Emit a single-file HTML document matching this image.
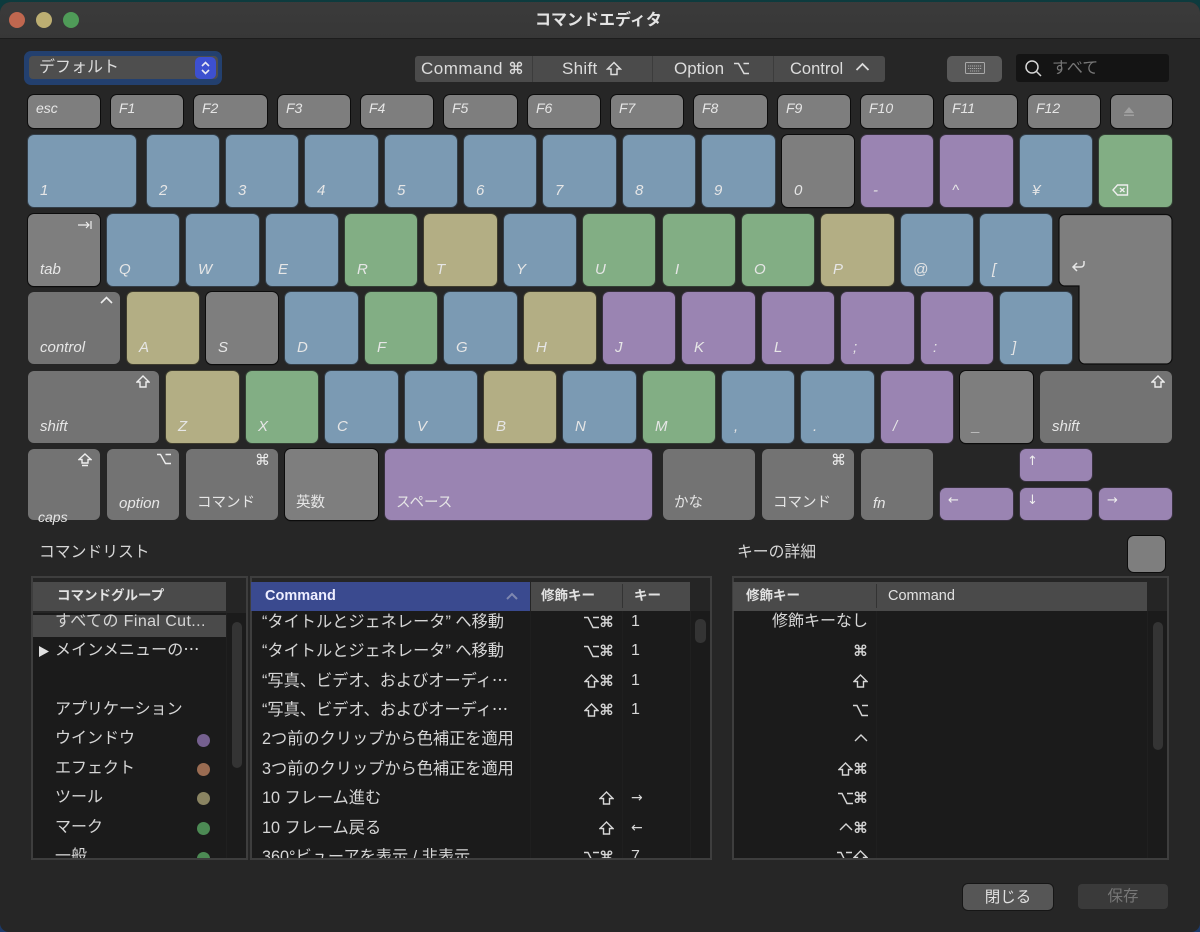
<!DOCTYPE html>
<html lang="ja"><head><meta charset="utf-8"><title>コマンドエディタ</title>
<style>
*{box-sizing:border-box}
html,body{margin:0;padding:0;width:1200px;height:932px;overflow:hidden}
html{background:#0d3b3e}
body{background:linear-gradient(#0d3b3e 0,#0d3b3e 50%,#1d3a6a 100%);font-family:"Liberation Sans","Noto Sans CJK JP",sans-serif;color:#d8d8d8;position:relative}
#win{position:absolute;left:0;top:2px;width:1200px;height:930px;background:#262626;border-radius:11px 11px 9px 9px;overflow:hidden}
#stage{position:absolute;left:0;top:-2px;width:1200px;height:932px}
.abs,.k{position:absolute}
.k{border-radius:6px;font-style:italic;font-size:15px;color:#e6e6e6}
.k b{position:absolute;left:12px;bottom:8px;font-weight:400;line-height:16px;white-space:nowrap}
.k i{position:absolute;right:8px;top:2px;font:normal 14px/16px "DejaVu Sans",sans-serif;color:#eee}
.k svg.ic{position:absolute;fill:none;stroke:#eee;stroke-width:1.4}
.g{background:#7e7e7e;box-shadow:0 0 0 1px #0c0c0c,0 1px 1px #000}
.m{background:#737373}
.b{background:#7b9ab3;box-shadow:0 0 0 1px rgba(90,135,175,.25)}
.n{background:#82ae84;box-shadow:0 0 0 1px rgba(90,140,95,.25)}
.y{background:#b3ae84;box-shadow:0 0 0 1px rgba(140,130,70,.25)}
.p{background:#9a84b2;box-shadow:0 0 0 1px rgba(110,85,140,.25)}
.f{font-size:14px}
.f b{top:5px;bottom:auto;left:8px}
.jp{font-style:normal;font-size:14.5px}
.jp b{left:11px;bottom:9px}
.panel{position:absolute;top:576px;height:284px;border:2px solid #3e3e3e;background:#1b1b1b;overflow:hidden}
.t{position:absolute;margin-top:1px;line-height:20px;font-size:16px;white-space:nowrap;color:#d6d6d6}
.c{font-size:16.2px}
.r{text-align:right;font-family:"DejaVu Sans","Liberation Sans",sans-serif;font-size:15px;-webkit-text-stroke:.25px #d6d6d6}
.r svg{fill:none;stroke:#d6d6d6;stroke-width:1.4;vertical-align:-2px;margin-left:1px}
.hd{position:absolute;top:582px;height:29px;background:#4a4a4a}
.ht{position:absolute;top:586px;line-height:20px;font-size:13.5px;font-weight:700;color:#e2e2e2;white-space:nowrap}
.sc{position:absolute;background:#343434;border-radius:5px}
.dot{position:absolute;width:13px;height:13px;border-radius:50%;left:197px}
.seg{position:absolute;top:58px;line-height:22px;font-size:17px;color:#dcdcdc;white-space:nowrap}
.ss{position:absolute;fill:none;stroke:#dcdcdc;stroke-width:1.5}
</style></head><body>
<div id="win"><div id="stage">
<div class="abs" style="left:0;top:0;width:1200px;height:39px;background:linear-gradient(#3b3b3b,#373737);border-bottom:1px solid #1d1d1d"></div>
<div class="abs" style="left:9px;top:12px;width:16px;height:16px;border-radius:50%;background:#c0674f"></div>
<div class="abs" style="left:36px;top:12px;width:16px;height:16px;border-radius:50%;background:#bcae72"></div>
<div class="abs" style="left:63px;top:12px;width:16px;height:16px;border-radius:50%;background:#4f9b58"></div>
<div class="abs" style="left:0;top:11px;width:1197px;text-align:center;font-size:16px;line-height:20px;font-weight:700;color:#e4e4e4">コマンドエディタ</div>

<div class="abs" style="left:24px;top:51px;width:198px;height:34px;border-radius:7px;background:#23406f"></div>
<div class="abs" style="left:29px;top:56px;width:189px;height:23px;border-radius:4px;background:#4e4e4e"></div>
<div class="abs" style="left:39px;top:57px;line-height:22px;font-size:16px;color:#dcdcdc">デフォルト</div>
<div class="abs" style="left:195px;top:57px;width:21px;height:22px;border-radius:5px;background:#3d50d0"></div>
<svg class="abs" style="left:195px;top:57px" width="21" height="22" fill="none" stroke="#e8e8f4" stroke-width="1.6"><path d="M7 9l3.5-3.5L14 9M7 13l3.5 3.5L14 13"/></svg>

<div class="abs" style="left:415px;top:56px;width:470px;height:26px;border-radius:3px;background:#4b4b4b"></div>
<div class="abs" style="left:532px;top:56px;width:1px;height:26px;background:#3c3c3c"></div>
<div class="abs" style="left:652px;top:56px;width:1px;height:26px;background:#3c3c3c"></div>
<div class="abs" style="left:773px;top:56px;width:1px;height:26px;background:#3c3c3c"></div>
<div class="seg" style="left:421px;letter-spacing:.5px">Command</div>
<div class="seg" style="left:508px;font:16px/22px 'DejaVu Sans',sans-serif;-webkit-text-stroke:.2px #dcdcdc">⌘</div>
<div class="seg" style="left:562px;letter-spacing:.3px">Shift</div>
<svg class="ss" style="left:606px;top:61px" width="16" height="15"><path d="M8 1.500L14.500 8H11V13.500H5V8H1.500z"/></svg>
<div class="seg" style="left:674px">Option</div>
<svg class="ss" style="left:733px;top:62px" width="17" height="13"><path d="M1 1.500h4.500l5.500 10h5M10.500 1.500H16"/></svg>
<div class="seg" style="left:790px;font-size:16.5px">Control</div>
<svg class="ss" style="left:855px;top:62px;stroke-width:1.8" width="15" height="9"><path d="M1.500 8L7.500 2l6 6"/></svg>

<div class="abs" style="left:947px;top:56px;width:55px;height:26px;border-radius:5px;background:#595959"></div>
<svg class="abs" style="left:964px;top:61px" width="22" height="15" fill="none" stroke="#a8a8a8"><rect x="1.500" y="1.500" width="19" height="11" rx="1"/><path d="M4 5h14M4 7.500h14M6 10h10" stroke-dasharray="1.200 .8"/></svg>
<div class="abs" style="left:1016px;top:54px;width:153px;height:28px;border-radius:3px;background:#141414"></div>
<svg class="abs" style="left:1024px;top:59px" width="20" height="20" fill="none" stroke="#d6d6d6" stroke-width="1.500"><circle cx="8" cy="8" r="6"/><path d="M12.500 12.500L17 17"/></svg>
<div class="abs" style="left:1052px;top:59px;line-height:20px;font-size:16px;color:#777">すべて</div>

<!-- F row -->
<div class="k g f" style="left:28px;top:95px;width:72px;height:33px"><b>esc</b></div>
<div class="k g f" style="left:111px;top:95px;width:72px;height:33px"><b>F1</b></div>
<div class="k g f" style="left:194px;top:95px;width:73px;height:33px"><b>F2</b></div>
<div class="k g f" style="left:278px;top:95px;width:72px;height:33px"><b>F3</b></div>
<div class="k g f" style="left:361px;top:95px;width:72px;height:33px"><b>F4</b></div>
<div class="k g f" style="left:444px;top:95px;width:73px;height:33px"><b>F5</b></div>
<div class="k g f" style="left:528px;top:95px;width:72px;height:33px"><b>F6</b></div>
<div class="k g f" style="left:611px;top:95px;width:72px;height:33px"><b>F7</b></div>
<div class="k g f" style="left:694px;top:95px;width:73px;height:33px"><b>F8</b></div>
<div class="k g f" style="left:778px;top:95px;width:72px;height:33px"><b>F9</b></div>
<div class="k g f" style="left:861px;top:95px;width:72px;height:33px"><b>F10</b></div>
<div class="k g f" style="left:944px;top:95px;width:73px;height:33px"><b>F11</b></div>
<div class="k g f" style="left:1028px;top:95px;width:72px;height:33px"><b>F12</b></div>
<div class="k g" style="left:1111px;top:95px;width:61px;height:33px"><svg class="abs" style="left:12px;top:11px" width="12" height="12" fill="#a0a0a0"><path d="M6 1l5 6H1zM1 8.500h10V10H1z"/></svg></div>

<!-- Number row -->
<div class="k b" style="left:28px;top:135px;width:108px;height:72px"><b>1</b></div>
<div class="k b" style="left:147px;top:135px;width:72px;height:72px"><b>2</b></div>
<div class="k b" style="left:226px;top:135px;width:72px;height:72px"><b>3</b></div>
<div class="k b" style="left:305px;top:135px;width:73px;height:72px"><b>4</b></div>
<div class="k b" style="left:385px;top:135px;width:72px;height:72px"><b>5</b></div>
<div class="k b" style="left:464px;top:135px;width:72px;height:72px"><b>6</b></div>
<div class="k b" style="left:543px;top:135px;width:73px;height:72px"><b>7</b></div>
<div class="k b" style="left:623px;top:135px;width:72px;height:72px"><b>8</b></div>
<div class="k b" style="left:702px;top:135px;width:73px;height:72px"><b>9</b></div>
<div class="k g" style="left:782px;top:135px;width:72px;height:72px"><b>0</b></div>
<div class="k p" style="left:861px;top:135px;width:72px;height:72px"><b>-</b></div>
<div class="k p" style="left:940px;top:135px;width:73px;height:72px"><b>^</b></div>
<div class="k b" style="left:1020px;top:135px;width:72px;height:72px"><b>¥</b></div>
<div class="k n" style="left:1099px;top:135px;width:73px;height:72px"><svg class="abs" style="left:13px;top:48px" width="17" height="14" fill="none" stroke="#eee" stroke-width="1.400"><path d="M5.500 2H15.500V12H5.500L1 7zM8 5l4.500 4M12.500 5L8 9"/></svg></div>

<!-- Row 2 -->
<div class="k g" style="left:28px;top:214px;width:72px;height:72px"><b>tab</b><svg class="ic" style="left:50px;top:6px;stroke-width:1.200" width="14" height="10"><path d="M0 5h11M8 2l3 3-3 3M13 1v8"/></svg></div>
<div class="k b" style="left:107px;top:214px;width:72px;height:72px"><b>Q</b></div>
<div class="k b" style="left:186px;top:214px;width:73px;height:72px"><b>W</b></div>
<div class="k b" style="left:266px;top:214px;width:72px;height:72px"><b>E</b></div>
<div class="k n" style="left:345px;top:214px;width:72px;height:72px"><b>R</b></div>
<div class="k y" style="left:424px;top:214px;width:73px;height:72px"><b>T</b></div>
<div class="k b" style="left:504px;top:214px;width:72px;height:72px"><b>Y</b></div>
<div class="k n" style="left:583px;top:214px;width:72px;height:72px"><b>U</b></div>
<div class="k n" style="left:663px;top:214px;width:72px;height:72px"><b>I</b></div>
<div class="k n" style="left:742px;top:214px;width:72px;height:72px"><b>O</b></div>
<div class="k y" style="left:821px;top:214px;width:73px;height:72px"><b>P</b></div>
<div class="k b" style="left:901px;top:214px;width:72px;height:72px"><b>@</b></div>
<div class="k b" style="left:980px;top:214px;width:72px;height:72px"><b>[</b></div>
<!-- return -->
<svg class="abs" style="left:1058px;top:213px" width="116" height="152"><path d="M7 1.500H108a6 6 0 0 1 6 6V145a6 6 0 0 1-6 6H27a6 6 0 0 1-6-6V73H7a6 6 0 0 1-6-6V7.500a6 6 0 0 1 6-6z" fill="#7e7e7e" stroke="#0c0c0c" stroke-width="1.200"/><path d="M26 48v3a3 3 0 0 1-3 3H15M19 50l-4 4 4 4" fill="none" stroke="#e6e6e6" stroke-width="1.500"/></svg>

<!-- Row 3 -->
<div class="k m" style="left:28px;top:292px;width:92px;height:72px"><b>control</b><svg class="ic" style="left:72px;top:4px;stroke-width:1.600" width="13" height="8"><path d="M1 7l5.500-5.500L12 7"/></svg></div>
<div class="k y" style="left:127px;top:292px;width:72px;height:72px"><b>A</b></div>
<div class="k g" style="left:206px;top:292px;width:72px;height:72px"><b>S</b></div>
<div class="k b" style="left:285px;top:292px;width:73px;height:72px"><b>D</b></div>
<div class="k n" style="left:365px;top:292px;width:72px;height:72px"><b>F</b></div>
<div class="k b" style="left:444px;top:292px;width:73px;height:72px"><b>G</b></div>
<div class="k y" style="left:524px;top:292px;width:72px;height:72px"><b>H</b></div>
<div class="k p" style="left:603px;top:292px;width:72px;height:72px"><b>J</b></div>
<div class="k p" style="left:682px;top:292px;width:73px;height:72px"><b>K</b></div>
<div class="k p" style="left:762px;top:292px;width:72px;height:72px"><b>L</b></div>
<div class="k p" style="left:841px;top:292px;width:73px;height:72px"><b>;</b></div>
<div class="k p" style="left:921px;top:292px;width:72px;height:72px"><b>:</b></div>
<div class="k b" style="left:1000px;top:292px;width:72px;height:72px"><b>]</b></div>

<!-- Row 4 -->
<div class="k m" style="left:28px;top:371px;width:131px;height:72px"><b>shift</b><svg class="ic" style="left:108px;top:4px" width="14" height="13"><path d="M7 1L13 7H10V12H4V7H1z"/></svg></div>
<div class="k y" style="left:166px;top:371px;width:73px;height:72px"><b>Z</b></div>
<div class="k n" style="left:246px;top:371px;width:72px;height:72px"><b>X</b></div>
<div class="k b" style="left:325px;top:371px;width:73px;height:72px"><b>C</b></div>
<div class="k b" style="left:405px;top:371px;width:72px;height:72px"><b>V</b></div>
<div class="k y" style="left:484px;top:371px;width:72px;height:72px"><b>B</b></div>
<div class="k b" style="left:563px;top:371px;width:73px;height:72px"><b>N</b></div>
<div class="k n" style="left:643px;top:371px;width:72px;height:72px"><b>M</b></div>
<div class="k b" style="left:722px;top:371px;width:72px;height:72px"><b>,</b></div>
<div class="k b" style="left:801px;top:371px;width:73px;height:72px"><b>.</b></div>
<div class="k p" style="left:881px;top:371px;width:72px;height:72px"><b>/</b></div>
<div class="k g" style="left:960px;top:371px;width:73px;height:72px"><b>_</b></div>
<div class="k m" style="left:1040px;top:371px;width:132px;height:72px"><b>shift</b><svg class="ic" style="left:111px;top:4px" width="14" height="13"><path d="M7 1L13 7H10V12H4V7H1z"/></svg></div>

<!-- Row 5 -->
<div class="k m" style="left:28px;top:449px;width:72px;height:71px"><b style="bottom:-5px;left:10px;font-size:14px">caps</b><svg class="ic" style="left:50px;top:4px" width="14" height="14"><path d="M7 1L13 6.500H10V10H4V6.500H1zM4 12.500h6"/></svg></div>
<div class="k m" style="left:107px;top:449px;width:72px;height:71px"><b>option</b><svg class="ic" style="left:50px;top:4px" width="14" height="12"><path d="M0 1.500h3.500l5 9H14M8.500 1.500H14"/></svg></div>
<div class="k m jp" style="left:186px;top:449px;width:92px;height:71px"><b>コマンド</b><i style="top:3px;right:8px;font-size:15px">⌘</i></div>
<div class="k g jp" style="left:285px;top:449px;width:93px;height:71px"><b>英数</b></div>
<div class="k p jp" style="left:385px;top:449px;width:267px;height:71px"><b>スペース</b></div>
<div class="k m jp" style="left:663px;top:449px;width:92px;height:71px"><b>かな</b></div>
<div class="k m jp" style="left:762px;top:449px;width:92px;height:71px"><b>コマンド</b><i style="top:3px;right:8px;font-size:15px">⌘</i></div>
<div class="k m" style="left:861px;top:449px;width:72px;height:71px"><b>fn</b></div>
<div class="k p" style="left:1020px;top:449px;width:72px;height:32px"><i style="left:7px;right:auto;top:5px;font-size:13px">↑</i></div>
<div class="k p" style="left:940px;top:488px;width:73px;height:32px"><i style="left:8px;right:auto;top:5px;font-size:13px">←</i></div>
<div class="k p" style="left:1020px;top:488px;width:72px;height:32px"><i style="left:7px;right:auto;top:5px;font-size:13px">↓</i></div>
<div class="k p" style="left:1099px;top:488px;width:73px;height:32px"><i style="left:8px;right:auto;top:5px;font-size:13px">→</i></div>

<div class="t" style="left:39px;top:542px;font-size:15.8px">コマンドリスト</div>
<div class="t" style="left:737px;top:542px;font-size:15.8px">キーの詳細</div>
<div class="abs" style="left:1128px;top:536px;width:37px;height:36px;border-radius:6px;background:#7e7e7e;box-shadow:0 0 0 1px #0c0c0c"></div>

<!-- Panels -->
<div class="panel" style="left:31px;width:217px"></div>
<div class="panel" style="left:250px;width:462px"></div>
<div class="panel" style="left:732px;width:437px"></div>
<div class="abs" style="left:33px;top:578px;width:213px;height:35px;background:#252525"></div>
<div class="abs" style="left:252px;top:578px;width:458px;height:33px;background:#252525"></div>
<div class="abs" style="left:734px;top:578px;width:433px;height:33px;background:#252525"></div>
<div class="abs" style="left:226px;top:613px;width:1px;height:245px;background:#202020"></div>
<div class="abs" style="left:530px;top:611px;width:1px;height:247px;background:#1f1f1f"></div>
<div class="abs" style="left:622px;top:611px;width:1px;height:247px;background:#1f1f1f"></div>
<div class="abs" style="left:690px;top:611px;width:1px;height:247px;background:#202020"></div>
<div class="abs" style="left:876px;top:611px;width:1px;height:247px;background:#1f1f1f"></div>
<div class="abs" style="left:1147px;top:611px;width:1px;height:247px;background:#202020"></div>
<div class="abs" style="left:33px;top:615px;width:193px;height:22px;background:#4a4a4a"></div>

<div class="hd" style="left:33px;width:193px"></div>
<div class="ht" style="left:57px">コマンドグループ</div>
<div class="hd" style="left:251px;width:279px;background:#3a4a8f"></div>
<div class="hd" style="left:531px;width:159px"></div>
<div class="abs" style="left:622px;top:584px;width:1px;height:24px;background:#333"></div>
<div class="ht" style="left:265px;font-size:14.5px;color:#eef">Command</div>
<svg class="abs" style="left:505px;top:591px" width="14" height="10" fill="none" stroke="#7f88b0" stroke-width="2"><path d="M2 8l5-5 5 5"/></svg>
<div class="ht" style="left:541px">修飾キー</div>
<div class="ht" style="left:634px">キー</div>
<div class="hd" style="left:733px;width:414px"></div>
<div class="abs" style="left:876px;top:584px;width:1px;height:24px;background:#333"></div>
<div class="ht" style="left:746px">修飾キー</div>
<div class="ht" style="left:888px;font-weight:400;font-size:14.5px">Command</div>

<!-- Left list -->
<div class="t" style="left:55px;top:611px;letter-spacing:.4px">すべての Final Cut...</div>
<svg class="abs" style="left:38px;top:645px" width="12" height="13" fill="#e0e0e0"><path d="M1 1l10 5.500L1 12z"/></svg>
<div class="t" style="left:55px;top:640px;letter-spacing:.1px">メインメニューの⋯</div>
<div class="t" style="left:55px;top:699px">アプリケーション</div>
<div class="t" style="left:55px;top:728px">ウインドウ</div>
<div class="t" style="left:55px;top:758px">エフェクト</div>
<div class="t" style="left:55px;top:787px">ツール</div>
<div class="t" style="left:55px;top:817px">マーク</div>
<div class="abs" style="left:33px;top:846px;width:193px;height:12px;overflow:hidden"><div class="t" style="left:22px;top:0">一般</div><div class="dot" style="left:164px;top:6px;background:#4c8a54"></div></div>
<div class="dot" style="top:734px;background:#75608f"></div>
<div class="dot" style="top:763px;background:#9a6c52"></div>
<div class="dot" style="top:792px;background:#8a8462"></div>
<div class="dot" style="top:822px;background:#4c8a54"></div>
<div class="sc" style="left:232px;top:622px;width:10px;height:146px"></div>

<!-- Middle rows -->
<div class="abs" style="left:252px;top:611px;width:438px;height:247px;overflow:hidden">
<div class="t c" style="left:10px;top:0">“タイトルとジェネレータ” へ移動</div>
<div class="t c" style="left:10px;top:29px">“タイトルとジェネレータ” へ移動</div>
<div class="t c" style="left:10px;top:59px">“写真、ビデオ、およびオーディ⋯</div>
<div class="t c" style="left:10px;top:88px">“写真、ビデオ、およびオーディ⋯</div>
<div class="t c" style="left:10px;top:117px">2つ前のクリップから色補正を適用</div>
<div class="t c" style="left:10px;top:147px">3つ前のクリップから色補正を適用</div>
<div class="t c" style="left:10px;top:176px">10 フレーム進む</div>
<div class="t c" style="left:10px;top:206px">10 フレーム戻る</div>
<div class="t c" style="left:10px;top:235px">360°ビューアを表示 / 非表示</div>
<div class="t r" style="left:280px;width:82px;top:0"><svg width="15" height="13"><path d="M0 1.500h4l5 10h6M9 1.500h6"/></svg>⌘</div><div class="t" style="left:379px;top:0">1</div>
<div class="t r" style="left:280px;width:82px;top:29px"><svg width="15" height="13"><path d="M0 1.500h4l5 10h6M9 1.500h6"/></svg>⌘</div><div class="t" style="left:379px;top:29px">1</div>
<div class="t r" style="left:280px;width:82px;top:59px"><svg width="15" height="14"><path d="M7.500 1L14 7.500H10.500V13H4.500V7.500H1z"/></svg>⌘</div><div class="t" style="left:379px;top:59px">1</div>
<div class="t r" style="left:280px;width:82px;top:88px"><svg width="15" height="14"><path d="M7.500 1L14 7.500H10.500V13H4.500V7.500H1z"/></svg>⌘</div><div class="t" style="left:379px;top:88px">1</div>
<div class="t r" style="left:280px;width:82px;top:176px"><svg width="15" height="14"><path d="M7.500 1L14 7.500H10.500V13H4.500V7.500H1z"/></svg></div><div class="t" style="left:379px;top:176px;font:14px/20px 'DejaVu Sans',sans-serif">→</div>
<div class="t r" style="left:280px;width:82px;top:206px"><svg width="15" height="14"><path d="M7.500 1L14 7.500H10.500V13H4.500V7.500H1z"/></svg></div><div class="t" style="left:379px;top:206px;font:14px/20px 'DejaVu Sans',sans-serif">←</div>
<div class="t r" style="left:280px;width:82px;top:235px"><svg width="15" height="13"><path d="M0 1.500h4l5 10h6M9 1.500h6"/></svg>⌘</div><div class="t" style="left:379px;top:235px">7</div>
</div>
<div class="sc" style="left:695px;top:619px;width:11px;height:24px"></div>

<!-- Right rows -->
<div class="abs" style="left:734px;top:611px;width:413px;height:247px;overflow:hidden">
<div class="t" style="right:279px;top:0">修飾キーなし</div>
<div class="t r" style="left:34px;width:100px;top:29px">⌘</div>
<div class="t r" style="left:34px;width:100px;top:59px"><svg width="15" height="14"><path d="M7.500 1L14 7.500H10.500V13H4.500V7.500H1z"/></svg></div>
<div class="t r" style="left:34px;width:100px;top:88px"><svg width="15" height="13"><path d="M0 1.500h4l5 10h6M9 1.500h6"/></svg></div>
<div class="t r" style="left:34px;width:100px;top:117px"><svg width="14" height="13"><path d="M1 8l6-6 6 6"/></svg></div>
<div class="t r" style="left:34px;width:100px;top:147px"><svg width="15" height="14"><path d="M7.500 1L14 7.500H10.500V13H4.500V7.500H1z"/></svg>⌘</div>
<div class="t r" style="left:34px;width:100px;top:176px"><svg width="15" height="13"><path d="M0 1.500h4l5 10h6M9 1.500h6"/></svg>⌘</div>
<div class="t r" style="left:34px;width:100px;top:206px"><svg width="14" height="13"><path d="M1 8l6-6 6 6"/></svg>⌘</div>
<div class="t r" style="left:34px;width:100px;top:235px"><svg width="15" height="13"><path d="M0 1.500h4l5 10h6M9 1.500h6"/></svg><svg width="15" height="14"><path d="M7.500 1L14 7.500H10.500V13H4.500V7.500H1z"/></svg></div>
</div>
<div class="sc" style="left:1153px;top:622px;width:10px;height:128px"></div>

<div class="abs" style="left:963px;top:884px;width:90px;height:26px;border-radius:5px;background:#565656;box-shadow:0 0 0 1px #161616;text-align:center;line-height:27px;font-size:15.5px;color:#e0e0e0">閉じる</div>
<div class="abs" style="left:1078px;top:884px;width:90px;height:25px;border-radius:4px;background:#3a3a3a;text-align:center;line-height:26px;font-size:15.5px;color:#777">保存</div>
</div></div>
</body></html>
